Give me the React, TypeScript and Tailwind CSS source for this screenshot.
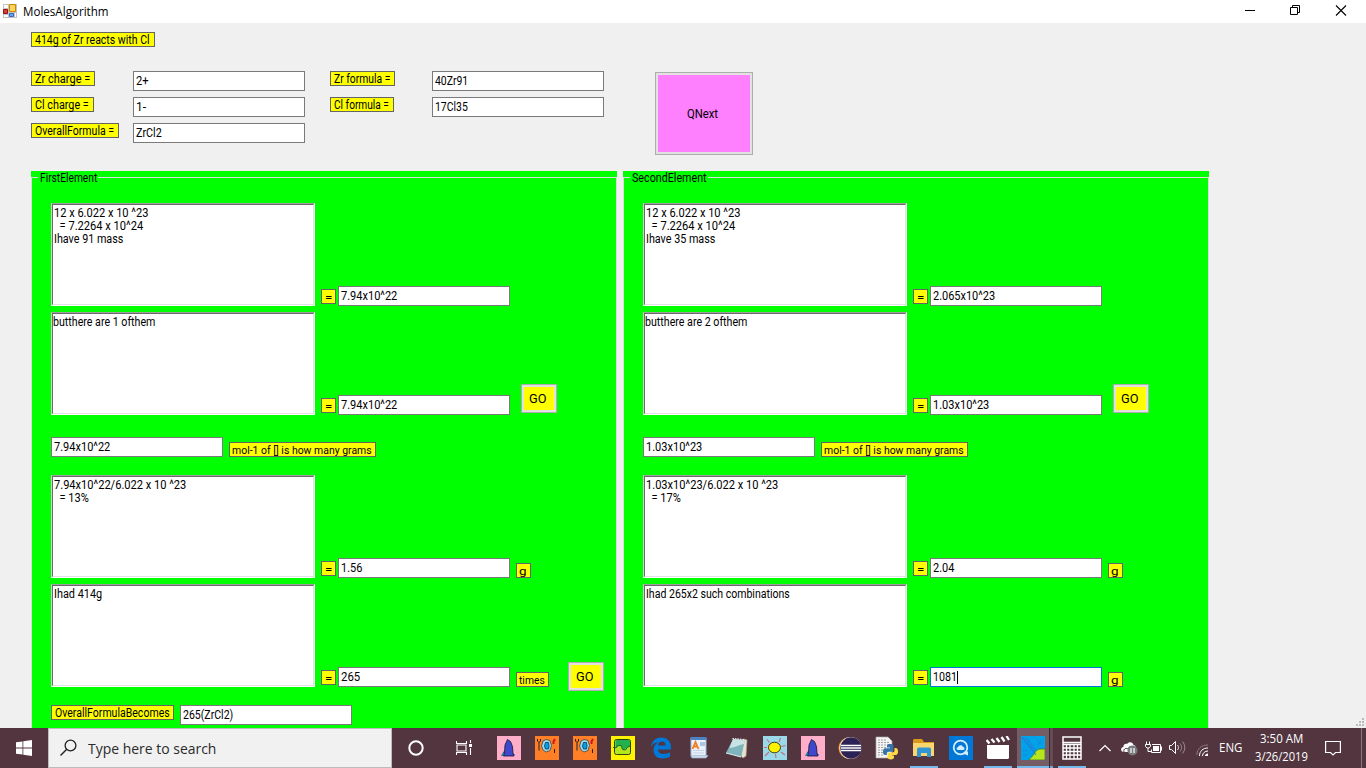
import { useLayoutEffect, useRef, useState } from "react";
import type { ReactNode } from "react";

/* Text condensed so that its run fills a given width. */
function Fit({ t, w, className = "" }: { t: string; w: number; className?: string }) {
  const ref = useRef<HTMLSpanElement>(null);
  const [sx, setSx] = useState(1);
  useLayoutEffect(() => {
    const el = ref.current;
    if (el) setSx(w / el.offsetWidth);
  }, [t, w]);
  return (
    <span className={`inline-block whitespace-pre ${className}`} style={{ width: w }}>
      <span ref={ref} className="inline-block origin-left" style={{ transform: `scaleX(${sx})` }}>
        {t}
      </span>
    </span>
  );
}

function Label({ t, w, className, small = false }: { t: string; w: number; className: string; small?: boolean }) {
  return (
    <div
      className={`flex h-[15px] shrink-0 items-start border border-[#646464] bg-[#ffff00] ${
        small && t !== "=" ? "pl-[2px]" : "pl-[3px]"
      } ${small ? "text-[11.5px] leading-[15px]" : "text-[12px] leading-[14px]"} ${className}`}
    >
      <Fit t={t} w={w} />
    </div>
  );
}

function Field({ t, w, className = "", focus = false }: { t: string; w: number; className?: string; focus?: boolean }) {
  return (
    <div
      className={`flex h-5 w-[172px] shrink-0 items-center border bg-white pl-[2px] leading-[18px] ${
        focus ? "border-[#0078d7]" : "border-[#7a7a7a]"
      } ${className}`}
    >
      <Fit t={t} w={w} />
      {focus && <span className="h-[13px] w-px bg-black" />}
    </div>
  );
}

function Memo({ children, className = "" }: { children: ReactNode; className?: string }) {
  return (
    <div className={`h-[103px] w-[264px] shrink-0 border border-t-[#a0a0a0] border-r-white border-b-white border-l-[#d0d0d0] ${className}`}>
      <div className="flex h-full flex-col items-start border border-t-[#696969] border-r-[#e3e3e3] border-b-[#e3e3e3] border-l-[#696969] bg-white pt-[2px] pl-px leading-[13px]">
        {children}
      </div>
    </div>
  );
}

function Go({ className }: { className: string }) {
  return (
    <button className={`h-[29px] w-9 shrink-0 border border-[#adadad] bg-[#e1e1e1] p-[2px] ${className}`}>
      <span className="flex h-full items-center bg-[#ffff00] pl-[5px] leading-none">
        <Fit t="GO" w={17} />
      </span>
    </button>
  );
}

type Line = [string, number];
type GroupData = {
  title: Line;
  calc: Line[];
  r1: Line;
  note: Line;
  r2: Line;
  moles: Line;
  ratio: Line[];
  r3: Line;
  had: Line;
  r4: Line;
};

const first: GroupData = {
  title: ["FirstElement", 57],
  calc: [["12 x 6.022 x 10 ^23", 94], ["  = 7.2264 x 10^24", 89], ["Ihave 91 mass", 69]],
  r1: ["7.94x10^22", 56],
  note: ["butthere are 1 ofthem", 102],
  r2: ["7.94x10^22", 56],
  moles: ["7.94x10^22", 56],
  ratio: [["7.94x10^22/6.022 x 10 ^23", 132], ["  = 13%", 35]],
  r3: ["1.56", 21],
  had: ["Ihad 414g", 48],
  r4: ["265", 19],
};

const second: GroupData = {
  title: ["SecondElement", 75],
  calc: [["12 x 6.022 x 10 ^23", 94], ["  = 7.2264 x 10^24", 89], ["Ihave 35 mass", 69]],
  r1: ["2.065x10^23", 62],
  note: ["butthere are 2 ofthem", 102],
  r2: ["1.03x10^23", 56],
  moles: ["1.03x10^23", 56],
  ratio: [["1.03x10^23/6.022 x 10 ^23", 132], ["  = 17%", 35]],
  r3: ["2.04", 21],
  had: ["Ihad 265x2 such combinations", 144],
  r4: ["1081", 24],
};

function Group({ d, main = false }: { d: GroupData; main?: boolean }) {
  const eq = <Label t="=" w={7} className="mb-[2px] ml-[6px] w-[15px]" small />;
  return (
    <section className="h-[557px] w-[586px] shrink-0 bg-[#00ff00]">
      <div className="flex h-[14px] items-start pt-[6px]">
        <span className="h-px w-[7px] bg-[#dcdcdc]" />
        <span className="-mt-[6px] h-[14px] pl-[2px] leading-[14px]">
          <Fit t={d.title[0]} w={d.title[1]} />
        </span>
        <span className="ml-px h-px flex-1 bg-[#dcdcdc]" />
      </div>
      <div className="-mt-[7px] h-[550px] border-x border-[#dcdcdc] pt-[25px] pl-[19px]">
        <div className="flex items-end">
          <Memo>{d.calc.map(([t, w]) => <Fit key={t} t={t} w={w} />)}</Memo>
          {eq}
          <Field t={d.r1[0]} w={d.r1[1]} className="ml-[2px]" />
        </div>
        <div className="mt-[6px] flex items-end">
          <Memo><Fit t={d.note[0]} w={d.note[1]} className="-ml-px" /></Memo>
          {eq}
          <Field t={d.r2[0]} w={d.r2[1]} className="ml-[2px]" />
          <Go className="mb-[2px] ml-[11px]" />
        </div>
        <div className="mt-[22px] flex items-end">
          <Field t={d.moles[0]} w={d.moles[1]} />
          <Label t="mol-1 of [] is how many grams" w={140} className="ml-[6px] w-[147px]" small />
        </div>
        <div className="mt-[18px] flex items-end">
          <Memo>{d.ratio.map(([t, w]) => <Fit key={t} t={t} w={w} />)}</Memo>
          {eq}
          <Field t={d.r3[0]} w={d.r3[1]} className="ml-[2px]" />
          <Label t="g" w={7} className="ml-[6px] w-[15px]" small />
        </div>
        <div className="mt-[6px] flex items-end">
          <Memo><Fit t={d.had[0]} w={d.had[1]} /></Memo>
          {eq}
          <Field t={d.r4[0]} w={d.r4[1]} className="ml-[2px]" focus={!main} />
          {main ? (
            <Label t="times" w={26} className="ml-[6px] w-[33px]" small />
          ) : (
            <Label t="g" w={7} className="ml-[6px] w-[15px]" small />
          )}
          {main && <Go className="-mb-1 ml-[19px]" />}
        </div>
        {main && (
          <div className="mt-[14px] flex items-start">
            <Label t="OverallFormulaBecomes" w={115} className="mt-1 w-[123px]" />
            <Field t="265(ZrCl2)" w={50} className="mt-1 ml-[6px]" />
          </div>
        )}
      </div>
    </section>
  );
}

const Svg = ({ children, w = 24, h = 24 }: { children: ReactNode; w?: number; h?: number }) => (
  <svg width={w} height={h} viewBox={`0 0 ${w} ${h}`} fill="none" className="block shrink-0">
    {children}
  </svg>
);

const Wizard = () => (
  <Svg>
    <path fill="#ffaec9" d="M0 0h24v24H0z" />
    <path fill="#3f48cc" stroke="#14142e" strokeWidth=".8" d="M10.5 3.500l3 2 2 5 .5 7.500h1v2H6.500v-2l1-1L8 9z" />
    <path fill="#00a2e8" stroke="#111" strokeWidth=".4" d="M7 15.500l-2.500 4H7z" />
  </Svg>
);
const Plate = () => (
  <Svg>
    <path fill="#ff7f27" d="M0 0h24v24H0z" />
    <path stroke="#222" d="M2.500 3v2l1.500 1.500v8M5.500 3v2L4 6.500M19.500 13v4" />
    <path fill="#99d9ea" stroke="#444" strokeWidth=".8" d="M8 5l3-1.500 4 1 1.500 5-1.500 5-4 1.500-3-2-1.500-4z" />
    <path fill="#00a2e8" stroke="#135" strokeWidth=".8" d="M10.500 6.500h3l.5 3.500-.5 3h-3l-1-3z" />
    <path stroke="#d3121c" strokeWidth="2" d="M18.500 8v-2.500l1.500-2.500" />
  </Svg>
);
const Scope = () => (
  <Svg>
    <path fill="#fff200" d="M0 0h24v24H0z" />
    <rect x="3.500" y="3.500" width="16" height="15" rx="2" fill="#b5e61d" stroke="#26440c" />
    <path fill="#22b14c" d="M4.500 4h14.500v6l-3 1.500-3 2.500-1.500-1-1-3-2.500-.5-3.500 3.500z" />
    <path stroke="#1b5a2b" strokeWidth=".9" d="M2 11.500h2.500l3-2h2.500l1.500 4 3 .5 2-3 3-1" />
  </Svg>
);
const Edge = () => (
  <Svg>
    <path fill="#0078d7" d="M2 11C3 4.500 7 1.500 12.500 1.500c6 0 9.500 4.500 9.500 9.500v2.500H9c.2 3 2.500 4.500 5.500 4.500 2.500 0 4.700-.6 6.500-1.700v4.500c-2 1.100-4.500 1.700-7.500 1.700-5.500 0-9-3.500-9-8.500 0-3.500 2-6.200 5-7.700C6 6.500 3.500 8 2 11zm7-1.500h7.500C16.500 7 15 5.500 13 5.500S9.500 7 9 9.500z" />
  </Svg>
);
const WordDoc = () => (
  <Svg>
    <path fill="#e9f1fa" stroke="#9fb8d4" d="M4 1.500h15v19H4z" />
    <path fill="#4d82c2" d="M4 1h15v3H4z" />
    <path stroke="#6e97c6" d="M13 7h5M13 9h5" />
    <path stroke="#c3d3e6" d="M6 14.500h11M6 17h11" />
    <path stroke="#ef7c20" strokeWidth="1.800" d="M5.500 13L8.500 6l3 7M7 10.500h3.500" />
    <path fill="#cbd9e8" stroke="#9fb8d4" strokeWidth=".7" d="M4 19.500h17l-2 2.500H5z" />
  </Svg>
);
const Notepad = () => (
  <Svg>
    <path fill="#e6e2d2" stroke="#a9a18a" strokeWidth=".7" d="M19 3l3 1-1 16-3 2-2-2z" />
    <path fill="#7fb4bd" d="M8 3l12 1-4 17-15-4z" />
    <path fill="#c8e3e4" d="M8 3l12 1-1 4C13 9 9 12 4.500 12z" />
    <path stroke="#fff" d="M7.500 2.500L20 3.500" strokeDasharray="1.500 1" />
    <path stroke="#e1eeee" d="M1 17l15 4" />
  </Svg>
);
const Sun = () => (
  <Svg>
    <path fill="#99d9ea" d="M0 0h24v24H0z" />
    <path stroke="#c66b78" strokeWidth="1.100" d="M4 3.500l2.500 3M16 6l1.500-4M18.500 10.500l4-1M18 16l4 3M12.500 18l.5 4M6 16l-4 4M4 11.500H1" />
    <ellipse cx="11.500" cy="11.500" rx="6" ry="5.300" fill="#fff200" stroke="#3c3c14" />
  </Svg>
);
const Eclipse = () => (
  <Svg>
    <circle cx="11" cy="12" r="10.500" fill="#f7941e" />
    <circle cx="12.500" cy="12" r="11" fill="#fff2dd" />
    <circle cx="13" cy="12" r="10.700" fill="#2c2255" />
    <path stroke="#fff" strokeWidth="1.500" d="M3 9.500h20M3 12h20M3 14.500h20" />
  </Svg>
);
const Python = () => (
  <Svg>
    <path fill="#f4f4f4" stroke="#aaa" strokeWidth=".7" d="M1 1h12l4 4v17H1z" />
    <path stroke="#999" strokeWidth=".9" strokeDasharray="2 1" d="M3 4h9M3 6.500h12M3 9h12M3 11.500h8M3 14h6M3 16.500h5M3 19h6" />
    <path fill="#3474a8" d="M12 9.500c0-1 1-1.500 3-1.500s3.500.5 3.500 2v4c0 1-.7 1.700-1.700 1.700h-3c-1.200 0-2 .8-2 2v1.300H10c-1.500 0-2-1.500-2-3.500s.7-3.300 2.300-3.300H15v-.7h-3z" />
    <path fill="#ffd845" d="M19.500 12h1.300c1.500 0 2.200 1.500 2.200 3.500s-.8 3.500-2.200 3.500H16v.6h3v2c0 1-1 1.900-3.200 1.900s-3.300-.8-3.300-1.900v-3.200c0-1.200.8-1.900 2-1.900h3c1.200 0 2-.8 2-2z" />
  </Svg>
);
const Folder = () => (
  <Svg>
    <path fill="#d99a1b" d="M1 4l1-1h8l2 3h10v4H1z" />
    <path fill="#fbd66e" d="M1 7h21v13H1z" />
    <path fill="#3295d6" d="M5 13l1-1.500h12l1 1.500v8h-4v-4H9v4H5z" />
  </Svg>
);
const Quick = () => (
  <Svg>
    <path fill="#0078d7" d="M0 0h24v24H0z" />
    <circle cx="11.500" cy="11.500" r="6.800" stroke="#d8edff" strokeWidth="1.800" />
    <path fill="#d8edff" d="M15.500 15.500h3.500v4l-5-2zM8.500 14c-1.500-.7-1-2.700.5-2.700.5-2.700 4.500-2.700 5-.3 1.700 0 2 2.300.7 3z" />
  </Svg>
);
const Clapper = () => (
  <Svg>
    <path fill="#fff" d="M1 9h22v13l-1 1H2l-1-1z" />
    <path stroke="#fff" strokeWidth="2.300" d="M.5 4l3 3.500M5.500 3l3 3.500M10.500 2l3 4M15.500 1l3 4.500M20.500 0l2.500 4" />
  </Svg>
);
const MapTile = () => (
  <Svg>
    <path fill="#00a2e8" d="M0 0h24v24H0z" />
    <path fill="#b5e61d" stroke="#3b6b3a" strokeWidth=".7" d="M8 24c1-2 3-3 5-6s3-5 7-5h4v11z" />
    <path stroke="#3f62cc" strokeWidth=".9" d="M1 1l14 18" />
    <path stroke="#3f62cc" strokeWidth=".8" strokeDasharray="1.500 1" d="M4 2l10 13M6 2l9 12M16 4l4 4M20 4l-3 5M2 14l4 1M2 19h4" />
  </Svg>
);
const Calc = () => (
  <Svg>
    <path stroke="#fff" strokeWidth="1.500" d="M3 1h18v22H3z" />
    <path stroke="#fff" strokeWidth="1.300" d="M3 6.500h18M3 8.500h18M3 12h18M3 15.500h18M3 19h18M6.500 8v15M10 8v15M14 8v15M17.500 8v15" />
  </Svg>
);

function Slot({ children, className, line = "" }: { children: ReactNode; className: string; line?: string }) {
  return (
    <div className={`flex h-10 shrink-0 flex-col items-center ${className}`}>
      <div className="flex h-[38px] items-center pt-[2px]">{children}</div>
      <div className={`h-[2px] ${line}`} />
    </div>
  );
}

export default function App() {
  return (
    <div className="flex h-[768px] w-[1366px] flex-col overflow-hidden bg-[#f0f0f0] font-['Roboto','Liberation_Sans',sans-serif] text-[12px] text-black">
      <header className="flex h-[23px] shrink-0 items-start bg-white">
        <div className="pt-1 pl-[3px]">
          <Svg w={14} h={14}>
            <path fill="#c4c4c4" d="M0 0h14v14H0z" />
            <path fill="#fff" d="M1 1h4v3H1zM1 11h4v2H1zM12 9h1v4h-1z" />
            <path fill="#ffd35a" stroke="#c68a08" d="M6.500.5h6v7h-6z" />
            <path fill="#d3413a" stroke="#9c1212" d="M.5 5.500h4v4h-4z" />
            <path fill="#6aa5f4" stroke="#3667c4" d="M6.500 9.500h4v3h-4z" />
          </Svg>
        </div>
        <span className="pt-[3px] pl-[6px] font-['Open_Sans','Noto_Sans',sans-serif] leading-[17px]">
          <Fit t="MolesAlgorithm" w={86} />
        </span>
        <div className="mt-[5px] mr-[19px] ml-auto flex">
          <Svg w={12} h={11}><path stroke="#000" d="M1 5.500h10" /></Svg>
          <span className="w-[33px]" />
          <Svg w={12} h={11}><path stroke="#000" d="M1.500 2.500h7v7h-7zM3.500 2V.5h7v7H9" /></Svg>
          <span className="w-[34px]" />
          <Svg w={12} h={11}><path stroke="#000" strokeWidth="1.100" d="M1 .5l10 10M11 .5l-10 10" /></Svg>
        </div>
      </header>

      <main className="flex min-h-0 flex-1">
        <div className="w-[1209px] shrink-0 pt-[9px] pl-[31px]">
          <Label t="414g of Zr reacts with Cl" w={115} className="w-[124px]" />
          <div className="flex h-[124px] items-start pt-6">
            <div className="flex w-[102px] flex-col gap-[11px]">
              <Label t="Zr charge =" w={55} className="w-16" />
              <Label t="Cl charge =" w={54} className="w-[63px]" />
              <Label t="OverallFormula =" w={79} className="w-[88px]" />
            </div>
            <div className="flex flex-col gap-[6px]">
              <Field t="2+" w={13} />
              <Field t="1-" w={10} />
              <Field t="ZrCl2" w={26} />
            </div>
            <div className="ml-[25px] flex w-[102px] flex-col gap-[11px]">
              <Label t="Zr formula =" w={56} className="w-[65px]" />
              <Label t="Cl formula =" w={55} className="w-16" />
            </div>
            <div className="flex flex-col gap-[6px]">
              <Field t="40Zr91" w={33} />
              <Field t="17Cl35" w={33} />
            </div>
            <button className="mt-px ml-[51px] h-[83px] w-[98px] border border-[#adadad] bg-[#e1e1e1] p-[2px]">
              <span className="flex h-full items-center justify-center bg-[#ff80ff] pr-[3px]">
                <Fit t="QNext" w={31} />
              </span>
            </button>
          </div>
          <div className="flex gap-[6px]">
            <Group d={first} main />
            <Group d={second} />
          </div>
        </div>
        <div className="mt-auto mr-[2px] mb-[2px] ml-auto">
          <Svg w={8} h={8}>
            <path fill="#bcbcbc" d="M6 0h2v2H6zM3 3h2v2H3zM6 3h2v2H6zM0 6h2v2H0zM3 6h2v2H3zM6 6h2v2H6z" />
          </Svg>
        </div>
      </main>

      <footer className="flex h-10 shrink-0 items-center bg-[#52353f] text-white">
        <div className="flex w-12 justify-center">
          <Svg w={16} h={16}>
            <path fill="#fff" d="M0 2.300L6.500 1.400V7.500H0zM7.300 1.300L16 0V7.500H7.300zM0 8.400H6.500V14.600L0 13.700zM7.300 8.400H16V16L7.300 14.700z" />
          </Svg>
        </div>
        <div className="flex h-10 w-[344px] items-center border border-[#bcbcbc] bg-[#f1f1f1] pl-[11px] text-[#2b2b2b]">
          <Svg w={17} h={18}>
            <circle cx="10.500" cy="6.500" r="5.400" stroke="#222" strokeWidth="1.300" />
            <path stroke="#222" strokeWidth="1.400" d="M6.500 10.500L.5 16.500" />
          </Svg>
          <span className="pt-px pl-[11px] font-['Open_Sans','Noto_Sans',sans-serif] text-[14.500px] leading-5">
            <Fit t="Type here to search" w={128} />
          </span>
        </div>
        <div className="flex w-12 justify-center">
          <Svg w={16} h={16}><circle cx="8" cy="8" r="6.700" stroke="#fff" strokeWidth="2" /></Svg>
        </div>
        <div className="flex w-[50px] pl-4">
          <Svg w={16} h={16}>
            <path stroke="#fff" strokeWidth="1.100" d="M.5 1v2.500h10V1M.5 15v-2.500h10V15M1 5h9v6H1zM14.500 0v3M14.500 8v7" />
            <path fill="#fff" d="M13 4h3v3h-3z" />
          </Svg>
        </div>
        <Slot className="w-[38px]"><Wizard /></Slot>
        <Slot className="w-[38px]"><Plate /></Slot>
        <Slot className="w-[38px]"><Plate /></Slot>
        <Slot className="w-[38px]"><Scope /></Slot>
        <Slot className="w-[38px]"><Edge /></Slot>
        <Slot className="w-[38px]"><WordDoc /></Slot>
        <Slot className="w-[38px]"><Notepad /></Slot>
        <Slot className="w-[38px]"><Sun /></Slot>
        <Slot className="w-[38px]"><Wizard /></Slot>
        <Slot className="w-[36px]"><Eclipse /></Slot>
        <Slot className="w-[38px]"><Python /></Slot>
        <Slot className="w-[36px]" line="w-7 bg-[#76b9ed]"><Folder /></Slot>
        <Slot className="w-[37px]"><Quick /></Slot>
        <Slot className="w-[38px]" line="w-7 bg-[#76b9ed]"><Clapper /></Slot>
        <div className="flex">
          <Slot className="w-8 bg-[#755d66]" line="w-8 bg-[#76b9ed]"><MapTile /></Slot>
          <div className="flex h-10 w-1 flex-col border-l border-[#3e2830] bg-[#654b54]">
            <span className="mt-auto h-[2px] bg-[#6aa5d6]" />
          </div>
        </div>
        <Slot className="w-[37px]" line="w-7 bg-[#76b9ed]"><Calc /></Slot>
        <div className="ml-[9px] flex items-center">
          <Svg w={12} h={8}><path stroke="#fff" strokeWidth="1.200" d="M.5 7L6 1.500 11.500 7" /></Svg>
          <div className="ml-[10px]">
            <Svg w={17} h={16}>
              <path fill="#fff" d="M3 12C-1 12-.5 7 2.500 7 2 4 5 3 6 4c2-3 6-2 6.500 1C15 5 15 8 14 9l-3 3z" />
              <path stroke="#52353f" d="M3 12c-1-4 3-4 4-3 0-2 3-3 5-2" />
              <circle cx="11.500" cy="10.500" r="5" fill="#777b7d" />
              <path stroke="#fff" strokeWidth="1.200" d="M10 8v5M13 8v5" />
            </Svg>
          </div>
          <div className="ml-[7px]">
            <Svg w={17} h={16}>
              <path stroke="#fff" d="M1.500 1.500v2.500M4.500 1.500v2.500M.5 4.500h5v2L4 8H2L.5 6.500zM3 8v3.500h3M7 4.500h8.500v8h-9v-3M16.500 6.500v4" />
              <path fill="#fff" d="M8 6h6v5H8z" />
            </Svg>
          </div>
          <div className="ml-[7px]">
            <Svg w={17} h={16}>
              <path stroke="#fff" d="M.5 5.500h2l4-4v12l-4-4h-2z" />
              <path stroke="#e5dde0" d="M8.500 5c1.300 1.500 1.300 3.500 0 5" />
              <path stroke="#a18f96" d="M11 3.500c2 2.500 2 5.500 0 8M13.500 1.500c3 3.500 3 8.500 0 12" />
            </Svg>
          </div>
          <div className="mt-1 ml-[10px]">
            <Svg w={13} h={13}>
              <path stroke="#8d777f" d="M.8 11C1 5 5 1 12 1" />
              <path stroke="#fff" d="M3.500 12C3.500 7 7 4 12 4M6.500 12C6.500 9 9 7 12 7" />
              <path fill="#fff" d="M9 12c0-1.500 1-2.500 3-2.500V12z" />
            </Svg>
          </div>
          <span className="ml-[10px] font-['Open_Sans','Noto_Sans',sans-serif] text-[12px]"><Fit t="ENG" w={23} /></span>
        </div>
        <div className="ml-[11px] flex w-[56px] flex-col items-center font-['Open_Sans','Noto_Sans',sans-serif] text-[12px] leading-[18px]">
          <Fit t="3:50 AM" w={43} />
          <Fit t="3/26/2019" w={53} />
        </div>
        <div className="ml-4">
          <Svg w={16} h={16}><path stroke="#fff" strokeWidth="1.200" d="M.6 1.500h14.800v11H10.500L8 15l-2.500-2.500H.6z" /></Svg>
        </div>
        <div className="mr-1 ml-auto h-10 w-px bg-[#8a7880]" />
      </footer>
    </div>
  );
}
